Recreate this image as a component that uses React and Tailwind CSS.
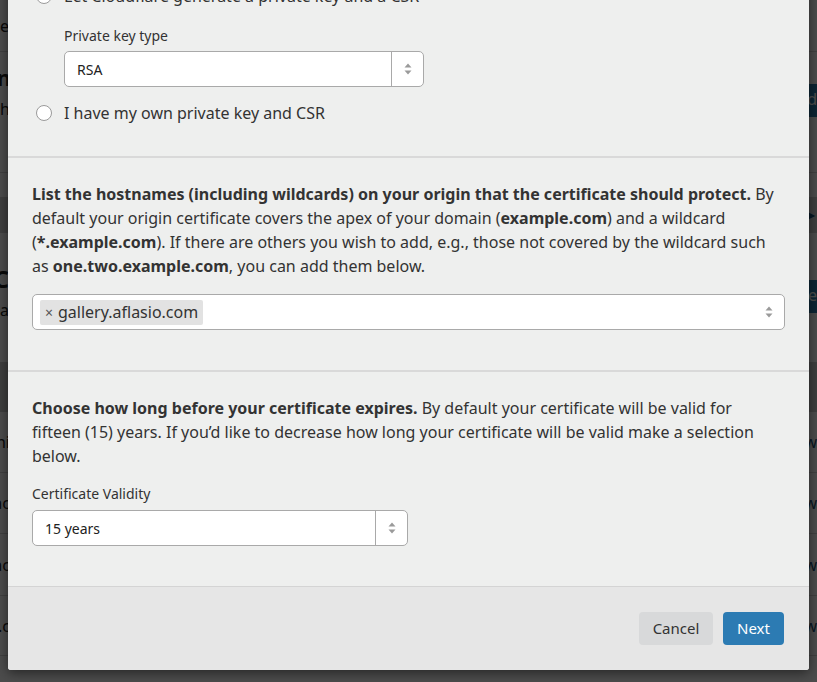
import React from 'react';

const FONT = { fontFamily: '"Noto Sans", "Open Sans", sans-serif' };

const Arrows = () => (
  <svg width="8" height="12" viewBox="0 0 8 12" aria-hidden="true">
    <path d="M4 0.5 L7.5 4.5 H0.5 Z" fill="#9a9a9a" />
    <path d="M4 11.5 L7.5 7.5 H0.5 Z" fill="#9a9a9a" />
  </svg>
);

const SelectBox = ({ value, width }) => (
  <div className={`flex h-9 items-stretch rounded-[5px] border border-[#a9a9a9] bg-white ${width}`}>
    <div className="flex flex-1 items-center pl-3 text-[14px] text-[#222]">{value}</div>
    <div className="flex w-8 items-center justify-center border-l border-[#a9a9a9]">
      <Arrows />
    </div>
  </div>
);

const Radio = ({ label }) => (
  <div className="flex h-6 items-center">
    <span className="ml-1 h-4 w-4 rounded-full border border-[#9a9a9a] bg-white" />
    <span className="ml-3 text-[16px] text-[#333]">{label}</span>
  </div>
);

// text whose right end sits at a fixed x, so that only its tail peeks out from behind the dialog
const Tail = ({ children, w, className = '' }) => (
  <div className={`flex justify-end overflow-hidden whitespace-nowrap ${w} ${className}`}>{children}</div>
);

const ListRow = ({ left, h }) => (
  <div className={`flex items-center border-b border-[#d8d8d8] ${h}`}>
    <div className="w-[806px]">
      <Tail w="w-[10px]" className="text-[16px] text-[#222]">{left}</Tail>
    </div>
    <span className="text-[16px] text-[#1d4f72]">view</span>
  </div>
);

export default function App() {
  return (
    <div className="relative h-[682px] w-[817px] overflow-hidden bg-white" style={FONT}>
      {/* page behind the dialog */}
      <div className="flex flex-col">
        <div className="flex h-[52px] items-center border-b border-[#d8d8d8]">
          <Tail w="w-[9px]" className="text-[16px] text-[#222]">None</Tail>
        </div>
        <div className="flex h-[121px] border-b border-[#d8d8d8]">
          <div className="flex w-[806px] flex-col pt-[9px]">
            <Tail w="w-[11px]" className="text-[22px] font-bold leading-8 text-[#222]">Origin</Tail>
            <Tail w="w-[10px]" className="mt-[4px] text-[16px] leading-6 text-[#222]">Each</Tail>
          </div>
          <div className="mt-[32px] h-[33px] flex-1 rounded-l bg-[#2c7cb0] pl-[3px] pt-[3px] text-[16px] text-white">pload</div>
        </div>
        <div className="h-[24px]" />
        <div className="flex h-[36px] items-center justify-end bg-[#d4d4d4] pr-[2px]">
          <span className="text-[12px] text-[#1d4f72]">▶</span>
        </div>
        <div className="flex h-[129px]">
          <div className="flex w-[806px] flex-col pt-[30px]">
            <Tail w="w-[9px]" className="text-[24px] font-bold leading-8 text-[#222]">Edge C</Tail>
            <Tail w="w-[9px]" className="mt-[3px] text-[16px] leading-6 text-[#222]">Use a</Tail>
          </div>
          <div className="mt-[47px] h-[33px] flex-1 rounded-l bg-[#2c7cb0] pl-[2px] pt-[3px] text-[16px] text-white">ate</div>
        </div>
        <div className="h-[50px] bg-[#d0d0d0]" />
        <ListRow h="h-[61px]" left="Hostni" />
        <ListRow h="h-[61px]" left="*.ac" />
        <ListRow h="h-[62px]" left="*.ac" />
        <ListRow h="h-[60px]" left="a.co.c" />
        <div className="flex h-[44px] items-end text-[16px] text-[#222]">
          <span className="ml-[25px] w-[405px]">flasio.com (2 hosts)</span>
          <span>2022-10-03</span>
        </div>
      </div>

      {/* overlay + dialog */}
      <div className="absolute inset-0 bg-black/70">
        <div className="mx-2 -mt-[40px] rounded-b-[3px] bg-[#eeefee] shadow-[0_3px_12px_rgba(0,0,0,0.5)]">
          <div className="px-6 pb-[31px] pt-6">
            <Radio label="Let Cloudflare generate a private key and a CSR" />
            <div className="ml-8 mt-[18px]">
              <div className="mb-[5px] text-[14px] leading-5 text-[#333]">Private key type</div>
              <SelectBox value="RSA" width="w-[360px]" />
            </div>
            <div className="mt-[14px]">
              <Radio label="I have my own private key and CSR" />
            </div>
          </div>

          <div className="border-t-2 border-[#d9d9d9] px-6 pb-10 pt-6">
            <p className="w-[750px] text-[16px] leading-6 text-[#333]">
              <b>List the hostnames (including wildcards) on your origin that the certificate should protect.</b> By
              default your origin certificate covers the apex of your domain (<b>example.com</b>) and a wildcard
              (<b>*.example.com</b>). If there are others you wish to add, e.g., those not covered by the wildcard such
              as <b>one.two.example.com</b>, you can add them below.
            </p>
            <div className="mt-4 flex h-9 items-center rounded-[5px] border border-[#a9a9a9] bg-white pl-[7px] pr-[11px]">
              <span className="flex h-[25px] items-center rounded-[2px] bg-[#e2e2e2] px-[5px] text-[16px] text-[#333]">
                <span className="mr-[5px] text-[14px] text-[#555]">×</span>gallery.aflasio.com
              </span>
              <span className="flex-1" />
              <Arrows />
            </div>
          </div>

          <div className="border-t-2 border-[#d9d9d9] px-6 pb-10 pt-6">
            <p className="w-[745px] text-[16px] leading-6 text-[#333]">
              <b>Choose how long before your certificate expires.</b> By default your certificate will be valid for
              fifteen (15) years. If you’d like to decrease how long your certificate will be valid make a selection
              below.
            </p>
            <div className="mt-4 mb-[6px] text-[14px] leading-5 text-[#333]">Certificate Validity</div>
            <SelectBox value="15 years" width="w-[376px]" />
          </div>

          <div className="flex h-[84px] items-center justify-end gap-[10px] rounded-b-[3px] border-t border-[#d4d4d4] bg-[#e6e6e6] pr-[25px]">
            <button className="h-[33px] w-[74px] rounded-[4px] bg-[#d8d9da] text-[15px] text-[#333]">Cancel</button>
            <button className="h-[33px] w-[61px] rounded-[4px] bg-[#2c7bb3] text-[15px] text-white">Next</button>
          </div>
        </div>
      </div>
    </div>
  );
}
